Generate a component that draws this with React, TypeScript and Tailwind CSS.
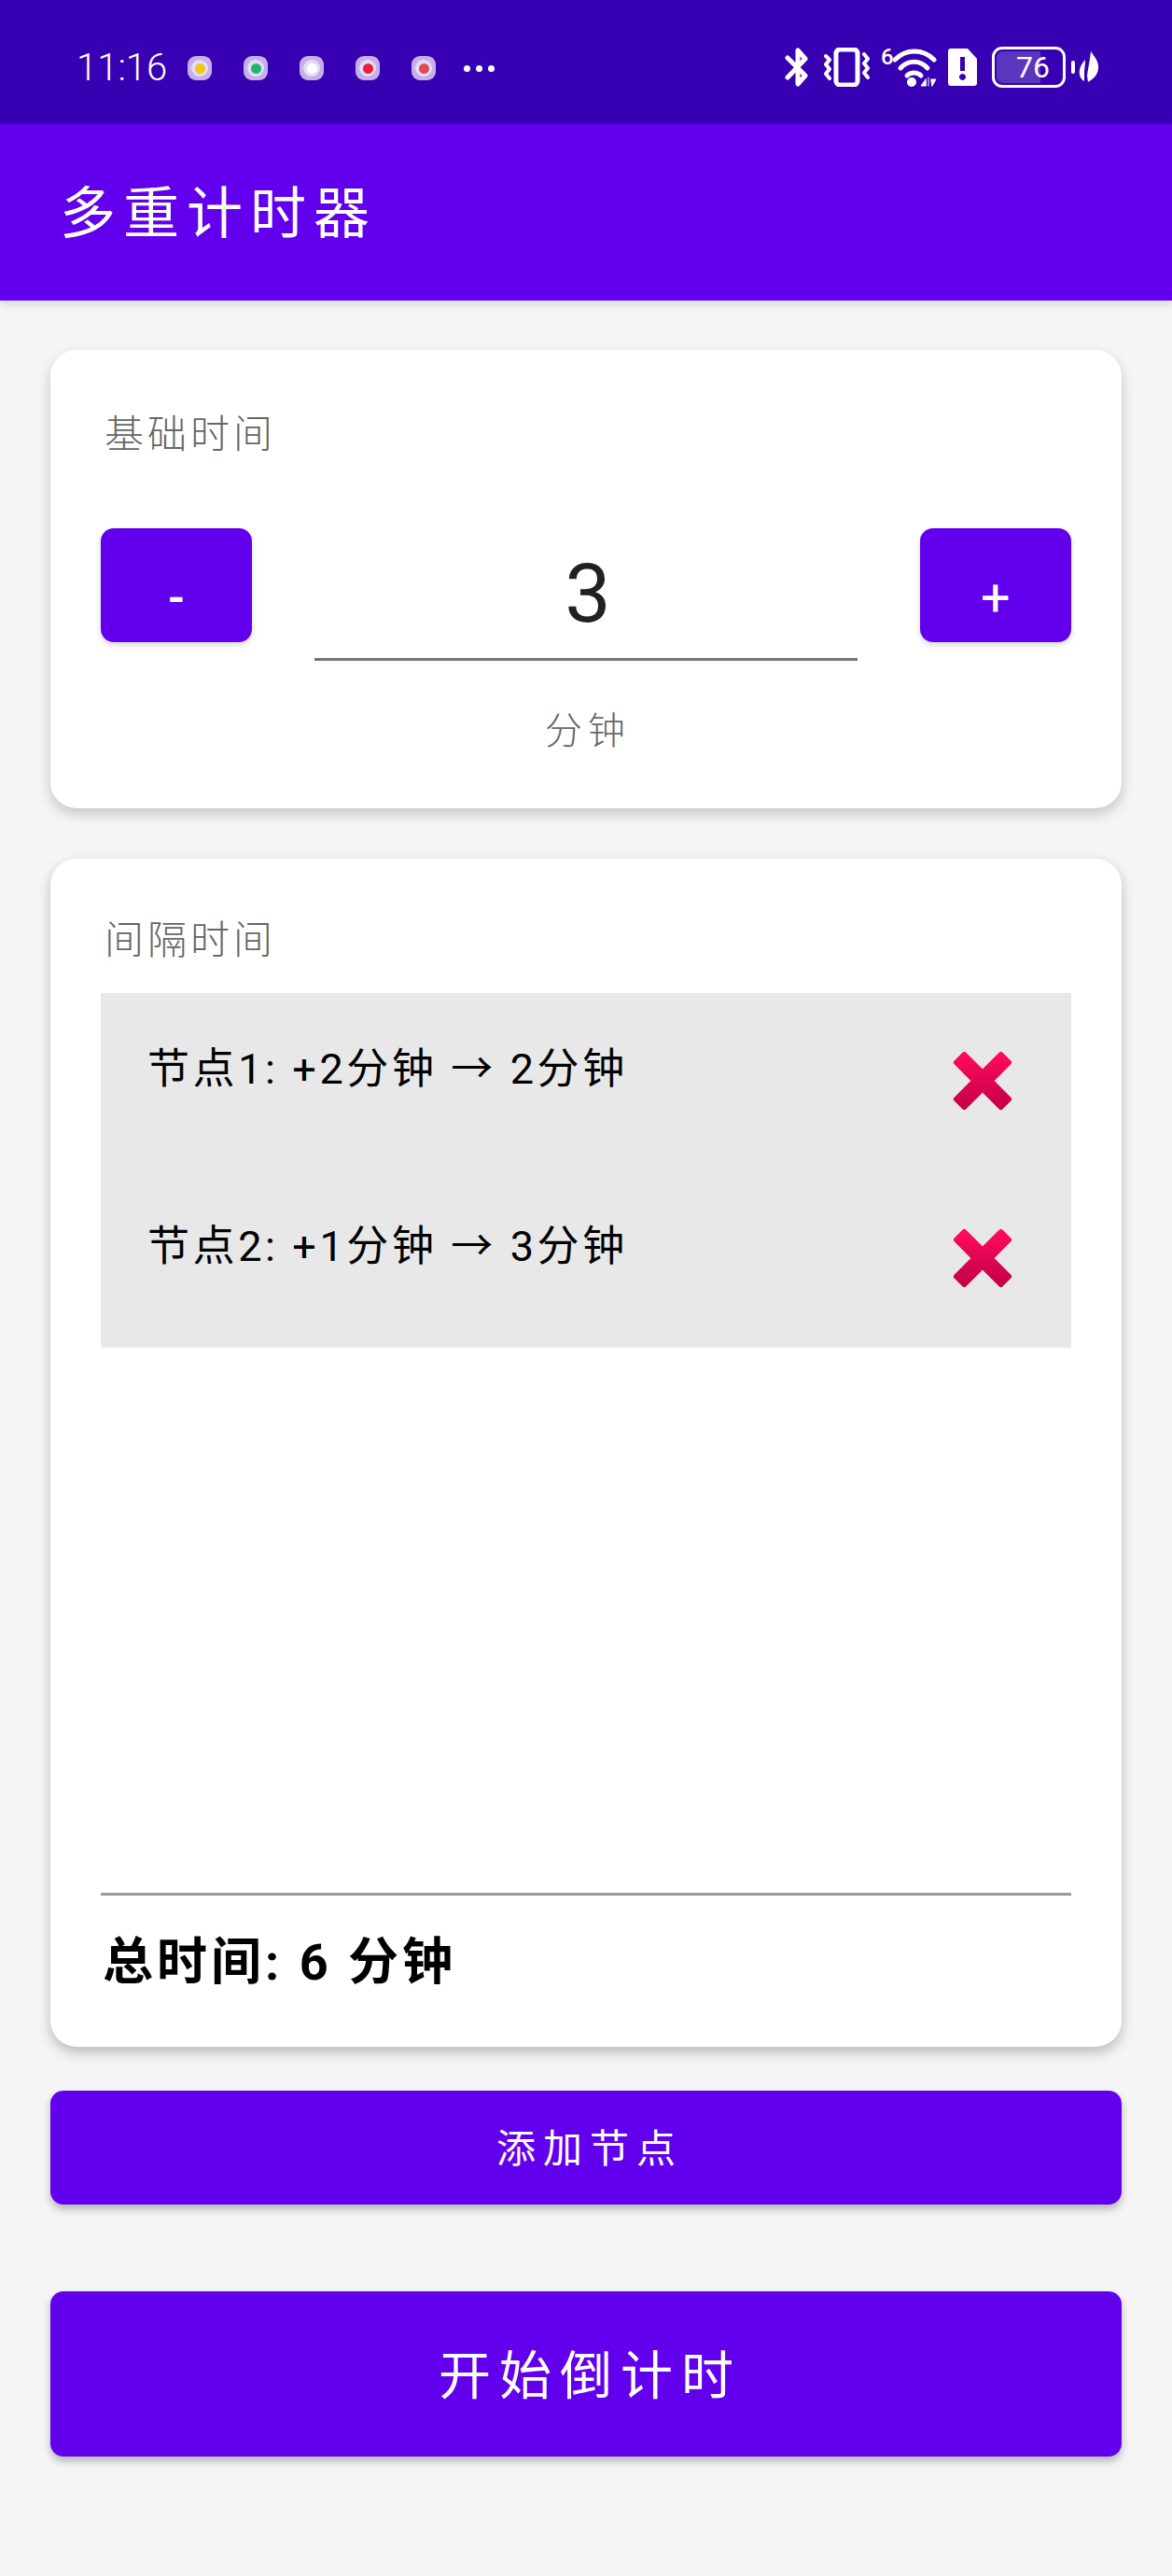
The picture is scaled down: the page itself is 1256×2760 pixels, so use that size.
import React from "react";

const cjk = "font-['Roboto','Noto_Sans_CJK_SC',sans-serif]";

const notifications = [
    { id: "a", dot: "bg-[#f5c518]" },
    { id: "b", dot: "bg-[#1fb868]" },
    { id: "c", dot: "bg-[#ffffff]" },
    { id: "d", dot: "bg-[#e8203c]" },
    { id: "e", dot: "bg-[#e04a58]" },
];

const nodes = [
    { label: "节点1: +2分钟 → 2分钟" },
    { label: "节点2: +1分钟 → 3分钟" },
];

function NotificationTile({ dot }: { dot: string }) {
    return (
        <div className="relative flex h-[26px] w-[26px] items-center justify-center rounded-[9px] bg-[#c4afea]">
            <div className="flex h-[18px] w-[18px] items-center justify-center rounded-full bg-[#e6dcf6]">
                <div className={`h-[11px] w-[11px] rounded-full ${dot}`} />
            </div>
            <div className="absolute right-[2px] top-[2px] h-[5px] w-[5px] rounded-full bg-[#e2a8dc]" />
        </div>
    );
}

function StatusIcons() {
    return (
        <div className="flex items-center">
            {/* bluetooth */}
            <svg width="26" height="44" viewBox="0 0 26 44" fill="none" stroke="white" strokeWidth="5" strokeLinejoin="round" strokeLinecap="round">
                <path d="M3 12 L22 31 L14 40 L14 26" />
                <path d="M3 33 L22 13 L14 4 L14 18" />
            </svg>
            {/* vibrate */}
            <svg className="ml-[16px]" width="49" height="42" viewBox="0 0 49 42" fill="none" stroke="white" strokeWidth="4" strokeLinejoin="round" strokeLinecap="round">
                <rect x="13" y="2" width="23" height="38" rx="4" strokeWidth="5" />
                <path d="M2 9 L6 13 L2 18 L6 23 L2 28 L6 33" />
                <path d="M43 7 L47 12 L43 17 L47 22 L43 27 L47 32" />
            </svg>
            {/* wifi with the 6 badge */}
            <div className="relative ml-[12px] h-[44px] w-[60px]">
                <span className="absolute left-0 top-[-5px] font-['Roboto',sans-serif] text-[24px] font-medium leading-[32px] text-white">6</span>
                <svg className="absolute left-[13px] top-[2px]" width="47" height="42" viewBox="0 0 47 42" fill="none" stroke="white" strokeWidth="5" strokeLinecap="round">
                    <path d="M2 12 C14 0 32 0 44 12" />
                    <path d="M8 21 C16 12 29 12 37 21" />
                    <path d="M15 29 C19 25 26 25 30 29" />
                    <circle cx="20" cy="36" r="5" fill="white" stroke="none" />
                    <path d="M35 33 L30 40 L35 40 Z M38 31 L38 40 M41 33 L46 33 L42 40 Z" fill="white" stroke="white" strokeWidth="1" />
                </svg>
            </div>
            {/* sim alert */}
            <svg className="ml-[12px]" width="31" height="40" viewBox="0 0 31 40">
                <path fillRule="evenodd" fill="white" d="M3 0 H21 L31 11 V37 a3 3 0 0 1 -3 3 H3 a3 3 0 0 1 -3 -3 V3 a3 3 0 0 1 3 -3 Z M13 9 V24 H18 V9 Z M15.5 27 a3.5 3.5 0 1 0 0.01 0 Z" />
            </svg>
            {/* battery */}
            <div className="relative ml-[16px] flex h-[44px] w-[79px] items-center justify-end overflow-hidden rounded-[11px] border-[3px] border-white">
                <div className="absolute inset-y-[2px] left-[2px] w-[47px] rounded-l-[7px] bg-[#5c35bf]" />
                <span className="relative mr-[14px] font-['Roboto',sans-serif] text-[32px] font-normal leading-none text-white">76</span>
            </div>
            <div className="ml-[6px] h-[14px] w-[4px] rounded-full bg-white" />
            {/* leaf */}
            <svg className="ml-[4px]" width="22" height="34" viewBox="0 0 22 34">
                <path fill="white" d="M13 0 C17 6 22 11 21 19 C20 26 15 30 10 33 L9 26 C10 18 12 10 13 0 Z M7 9 C2 14 0 20 1 25 C2 29 4 31 6 32 L6 23 C6 19 7 14 7 9 Z" />
            </svg>
        </div>
    );
}

function CloseIcon({ id }: { id: string }) {
    return (
        <svg width="72" height="72" viewBox="0 0 66 66" className="blur-[0.6px]">
            <defs>
                <linearGradient id={id} x1="0" y1="0" x2="0" y2="1">
                    <stop offset="0" stopColor="#ff0a5c" />
                    <stop offset="1" stopColor="#c40048" />
                </linearGradient>
            </defs>
            <path
                fill={`url(#${id})`}
                stroke={`url(#${id})`}
                strokeWidth="5"
                strokeLinejoin="round"
                d="M15 7 L33 25 L51 7 L59 15 L41 33 L59 51 L51 59 L33 41 L15 59 L7 51 L25 33 L7 15 Z"
            />
        </svg>
    );
}

export default function App() {
    return (
        <div className={`flex h-[2760px] w-[1256px] flex-col bg-[#f5f5f5] ${cjk}`}>
            {/* Status bar */}
            <div className="flex h-[133px] items-start justify-between bg-[#3700b3] pl-[82px] pr-[78px] pt-[50px]">
                <div className="flex items-center">
                    <span className="w-[119px] font-['Roboto',sans-serif] text-[40px] font-light leading-[46px] text-white">11:16</span>
                    <div className="flex gap-[34px]">
                        {notifications.map(n => (
                            <NotificationTile key={n.id} dot={n.dot} />
                        ))}
                    </div>
                    <div className="ml-[30px] flex gap-[6px]">
                        <div className="h-[7px] w-[7px] rounded-full bg-white" />
                        <div className="h-[7px] w-[7px] rounded-full bg-white" />
                        <div className="h-[7px] w-[7px] rounded-full bg-white" />
                    </div>
                </div>
                <StatusIcons />
            </div>

            {/* App bar */}
            <div className="flex h-[189px] items-center bg-[#6200ee] pl-[64px] pt-[4px] shadow-[0_4px_8px_rgba(0,0,0,0.12)]">
                <h1 className="text-[60px] font-normal leading-none tracking-[8px] text-white">多重计时器</h1>
            </div>

            <main className="flex flex-col px-[54px] pt-[53px]">
                {/* Base time */}
                <section className="flex h-[491px] flex-col rounded-[28px] bg-white px-[54px] shadow-[0_6px_14px_rgba(0,0,0,0.2)]">
                    <h2 className="mt-[66px] pl-[4px] text-[42px] font-light leading-[50px] tracking-[4px] text-[#666666]">基础时间</h2>
                    <div className="mt-[75px] flex items-start justify-between">
                        <button className="flex h-[122px] w-[162px] items-center justify-center rounded-[14px] bg-[#6200ee] pt-[28px] text-[48px] font-bold leading-none text-white shadow-[0_3px_6px_rgba(0,0,0,0.16)]">-</button>
                        <div className="flex w-[582px] flex-col">
                            <div className="flex h-[142px] items-center justify-center border-b-[3px] border-[#757575] pl-[4px] font-['Roboto',sans-serif] text-[88px] font-normal leading-none text-[#212121]">3</div>
                        </div>
                        <button className="flex h-[122px] w-[162px] items-center justify-center rounded-[14px] bg-[#6200ee] pt-[28px] text-[56px] font-normal leading-none text-white shadow-[0_3px_6px_rgba(0,0,0,0.16)]">+</button>
                    </div>
                    <p className="mt-[51px] pl-[4px] text-center text-[40px] font-light leading-[50px] tracking-[6px] text-[#666666]">分钟</p>
                </section>

                {/* Interval time */}
                <section className="mt-[54px] flex h-[1273px] flex-col rounded-[28px] bg-white px-[54px] shadow-[0_6px_14px_rgba(0,0,0,0.24)]">
                    <h2 className="mt-[63px] pl-[4px] text-[42px] font-light leading-[50px] tracking-[4px] text-[#666666]">间隔时间</h2>
                    <ul className="mt-[31px] flex flex-col bg-[#e8e8e8]">
                        {nodes.map((node, i) => (
                            <li key={node.label} className="flex h-[190px] items-start justify-between pl-[50px] pr-[59px]">
                                <span className="mt-[52px] text-[45px] font-normal leading-[60px] tracking-[3.6px] text-black">{node.label}</span>
                                <div className="mt-[58px]">
                                    <CloseIcon id={`close-${i}`} />
                                </div>
                            </li>
                        ))}
                    </ul>
                    <div className="mt-[584px] h-[3px] bg-[#999999]" />
                    <p className="mt-[42px] pl-[2px] text-[54px] font-bold leading-[60px] tracking-[4px] text-black">总时间: 6 分钟</p>
                </section>

                <button className="mt-[47px] flex h-[122px] items-center justify-center rounded-[14px] bg-[#6200ee] pl-[8px] pt-[2px] text-[42px] font-normal tracking-[8px] text-white shadow-[0_5px_9px_rgba(0,0,0,0.26)]">添加节点</button>
                <button className="mt-[93px] flex h-[177px] items-center justify-center rounded-[14px] bg-[#6200ee] pl-[9px] pt-[4px] text-[56px] font-normal tracking-[9px] text-white shadow-[0_5px_9px_rgba(0,0,0,0.26)]">开始倒计时</button>
            </main>
        </div>
    );
}
